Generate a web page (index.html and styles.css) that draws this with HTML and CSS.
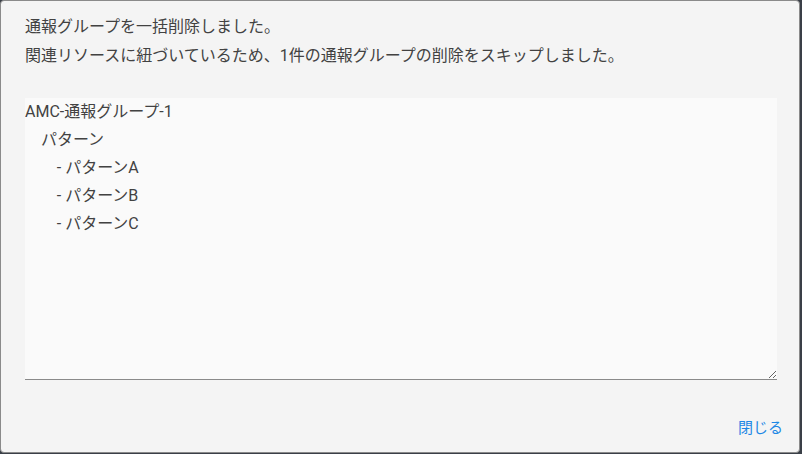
FILE: index.html
```html
<!DOCTYPE html>
<html lang="ja">
<head>
    <meta charset="UTF-8">
    <title>通報グループ削除</title>
    <link rel="stylesheet" href="styles.css">
</head>
<body>

    <div class="dialog">
        <div class="dialog-message">
            <p>通報グループを一括削除しました。</p>
            <p>関連リソースに紐づいているため、1件の通報グループの削除をスキップしました。</p>
        </div>

        <textarea class="skip-list" readonly>AMC-通報グループ-1
    パターン
        - パターンA
        - パターンB
        - パターンC</textarea>

        <div class="dialog-actions">
            <button type="button" class="btn-text">閉じる</button>
        </div>
    </div>

</body>
</html>
```

FILE: styles.css
```css
body {
    margin: 0;
    padding: 0;
    background: #3a3f47;
    font-family: Roboto, "Noto Sans CJK JP", sans-serif;
    color: #424242;
}

.dialog {
    box-sizing: border-box;
    width: 800px;
    height: 453px;
    background: #f4f4f4;
    border: 1px solid #8a8a8a;
    border-radius: 4px;
    display: flex;
    flex-direction: column;
}

.dialog-message {
    padding: 11px 22px 0 24px;
    font-size: 16px;
    line-height: 29px;
}

.dialog-message p {
    margin: 0;
}

.skip-list {
    display: block;
    box-sizing: border-box;
    margin: 28px 22px 0 24px;
    height: 282px;
    padding: 0;
    border: none;
    border-bottom: 1px solid #8a8a8a;
    border-radius: 0;
    background: #fafafa;
    font-family: Roboto, "Noto Sans CJK JP", sans-serif;
    font-size: 16px;
    line-height: 28px;
    color: #424242;
    outline: none;
    resize: vertical;
}

.dialog-actions {
    margin-top: auto;
    padding: 8px;
    display: flex;
    justify-content: flex-end;
}

.btn-text {
    height: 36px;
    padding: 0 8px;
    border: none;
    background: none;
    font-family: Roboto, "Noto Sans CJK JP", sans-serif;
    font-size: 15px;
    color: #1e88e5;
    cursor: pointer;
}
```
